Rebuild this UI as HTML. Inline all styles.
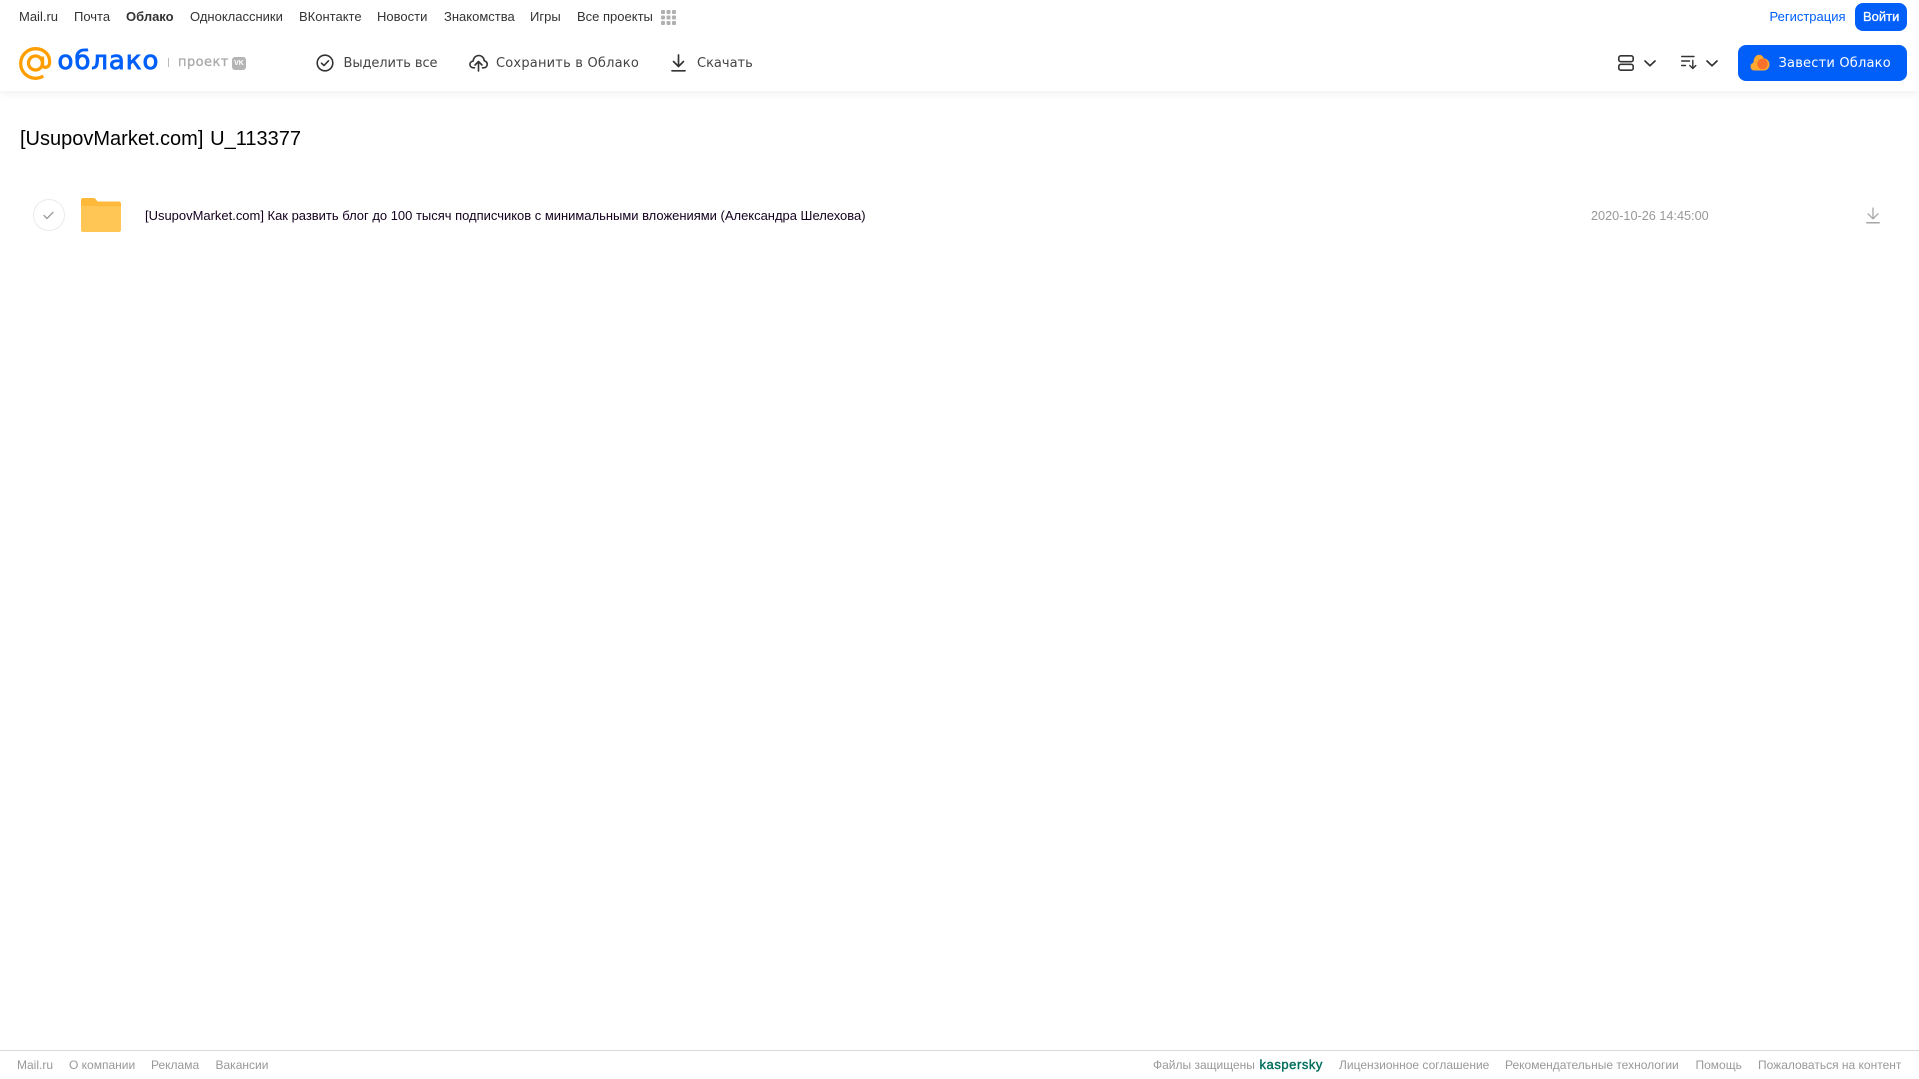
<!DOCTYPE html>
<html lang="ru">
<head>
<meta charset="utf-8">
<title>Облако</title>
<style>
html,body{margin:0;padding:0;background:#fff;width:1919px;height:1079px;overflow:hidden}
body{font-family:"Liberation Sans",Arial,sans-serif;position:relative}
.t{position:absolute;white-space:nowrap;line-height:20px;height:20px}
.n{top:7px;font-size:13px;color:#333}
.b{top:54px;color:#444;font-family:"DejaVu Sans","Liberation Sans",sans-serif;font-size:13px;letter-spacing:0}
.f{top:1055px;font-size:12px;color:#999}
svg{position:absolute;display:block}
#hdr{position:absolute;left:0;top:0;width:1919px;height:91px;background:#fff;box-shadow:0 2px 8px rgba(0,0,0,.07)}
.btn{position:absolute;background:#005ff9;border-radius:8px}
</style>
</head>
<body>
<div id="hdr"></div>

<span class="t n" style="left:19px">Mail.ru</span>
<span class="t n" style="left:74px">Почта</span>
<span class="t n" style="left:126px;font-weight:bold">Облако</span>
<span class="t n" style="left:190px">Одноклассники</span>
<span class="t n" style="left:299px">ВКонтакте</span>
<span class="t n" style="left:377px">Новости</span>
<span class="t n" style="left:444px">Знакомства</span>
<span class="t n" style="left:530px">Игры</span>
<span class="t n" style="left:577px">Все проекты</span>
<svg style="left:661px;top:10px" width="15" height="15" viewBox="0 0 15 15" fill="#b0b0b0">
<rect x="0" y="0" width="4" height="4" rx="1"/><rect x="5.500" y="0" width="4" height="4" rx="1"/><rect x="11" y="0" width="4" height="4" rx="1"/>
<rect x="0" y="5.500" width="4" height="4" rx="1"/><rect x="5.500" y="5.500" width="4" height="4" rx="1"/><rect x="11" y="5.500" width="4" height="4" rx="1"/>
<rect x="0" y="11" width="4" height="4" rx="1"/><rect x="5.500" y="11" width="4" height="4" rx="1"/><rect x="11" y="11" width="4" height="4" rx="1"/>
</svg>

<span class="t" style="left:1769.500px;top:7px;font-size:13px;color:#005ff9">Регистрация</span>
<div class="btn" style="left:1855px;top:3px;width:52px;height:28px"></div>
<span class="t" style="left:1863px;top:7px;font-size:13px;color:#fff;-webkit-text-stroke:.3px #fff">Войти</span>

<svg style="left:19px;top:47px" width="33" height="33" viewBox="0 0 33 33" fill="none" stroke="#ff9e00" stroke-width="3.300">
<circle cx="16.500" cy="16" r="7"/>
<path d="M23.500 9.500V17.500C23.500 21.500 29.800 21.500 30.500 16.500C31.600 7.500 24.500 1.700 16.500 1.700C8.300 1.700 1.700 8.300 1.700 16.500C1.700 24.700 8.300 31.300 16.500 31.300C19.500 31.300 22 30.500 24.300 29"/>
</svg>
<span class="t" style="left:57.500px;top:46px;height:30px;line-height:30px;font-family:'DejaVu Sans','Liberation Sans',sans-serif;font-size:26px;color:#005ff9;letter-spacing:.95px;-webkit-text-stroke:.9px #005ff9">облако</span>
<div style="position:absolute;left:168px;top:58px;width:1px;height:9px;background:#bbb"></div>
<span class="t" style="left:178px;top:53px;font-family:'DejaVu Sans','Liberation Sans',sans-serif;font-size:13px;color:#a9a9a9;letter-spacing:.45px;-webkit-text-stroke:.3px #a9a9a9">проект</span>
<div style="position:absolute;left:232px;top:57px;width:14px;height:13px;background:#b4b4b4;border-radius:3px;color:#fff;font:bold 7px/13px 'Liberation Sans',sans-serif;text-align:center">VK</div>

<svg style="left:316px;top:54px" width="18" height="18" viewBox="0 0 18 18" fill="none" stroke="#333" stroke-width="1.600">
<circle cx="9" cy="9" r="7.800"/><path d="M5.500 9.200L8 11.500L12.500 6.800" stroke-linecap="round" stroke-linejoin="round"/>
</svg>
<span class="t b" style="left:343.500px;letter-spacing:-.1px">Выделить все</span>

<svg style="left:469px;top:54px" width="19" height="18" viewBox="0 0 19 18" fill="none" stroke="#333" stroke-width="1.600" stroke-linecap="round" stroke-linejoin="round">
<path d="M5.500 13.800H4.500C2.400 13.800 .9 12.300 .9 10.500C.9 8.600 2.300 7.300 4 7.200C4.500 3.800 6.800 1.500 9.800 1.500C12.800 1.500 15 3.800 15.300 6.800C17 7.200 18.200 8.600 18.200 10.400C18.200 12.300 16.700 13.800 14.800 13.800H13.500"/>
<path d="M9.500 17V8M6 11L9.500 7.500L13 11"/>
</svg>
<span class="t b" style="left:496px;letter-spacing:.2px">Сохранить в Облако</span>

<svg style="left:671px;top:54px" width="15" height="18" viewBox="0 0 15 18" fill="none" stroke="#333" stroke-width="1.700" stroke-linecap="round" stroke-linejoin="round">
<path d="M7.500 1V12M2.500 7.500L7.500 12.500L12.500 7.500"/><path d="M1 16.800H14"/>
</svg>
<span class="t b" style="left:697px">Скачать</span>

<svg style="left:1618px;top:55px" width="16" height="16" viewBox="0 0 16 16" fill="none" stroke="#333" stroke-width="1.600">
<rect x=".8" y=".8" width="14.400" height="5.900" rx="2"/><rect x=".8" y="9.300" width="14.400" height="5.900" rx="2"/>
</svg>
<svg style="left:1644px;top:60px" width="12" height="7" viewBox="0 0 12 7" fill="none" stroke="#333" stroke-width="1.700" stroke-linecap="round" stroke-linejoin="round"><path d="M1 1L6 5.700L11 1"/></svg>
<svg style="left:1681px;top:55px" width="16" height="15" viewBox="0 0 16 15" fill="none" stroke="#333" stroke-width="1.400" stroke-linecap="round" stroke-linejoin="round">
<path d="M.7 1.500H13M.7 6H8.500M.7 10.500H4.500"/><path d="M11.800 5.500V13.500M8.800 10.500L11.800 13.500L14.800 10.500"/>
</svg>
<svg style="left:1706px;top:60px" width="12" height="7" viewBox="0 0 12 7" fill="none" stroke="#333" stroke-width="1.700" stroke-linecap="round" stroke-linejoin="round"><path d="M1 1L6 5.700L11 1"/></svg>

<div class="btn" style="left:1738px;top:45px;width:169px;height:36px"></div>
<svg style="left:1750px;top:54px" width="20" height="17" viewBox="0 0 20 17">
<path d="M4.500 16.500C2 16.500 .5 14.800 .5 12.500C.5 10.500 1.800 9 3.500 8.700C3.500 4 6 .8 9 .8C11.500 .8 13 2.300 13.800 4.500C17 4.500 19.500 7 19.500 10.500C19.500 14 17 16.500 14 16.500Z" fill="#ffa930"/>
<circle cx="12.500" cy="10" r="5.300" fill="#f8702c"/>
</svg>
<span class="t b" style="left:1778.500px;color:#fff;letter-spacing:.2px">Завести Облако</span>

<span class="t" style="left:20px;top:127px;height:24px;line-height:24px;font-size:20px;word-spacing:1.200px;color:#000">[UsupovMarket.com] U_113377</span>

<div style="position:absolute;left:33px;top:199px;width:30px;height:30px;border:1px solid #ebebeb;border-radius:50%"></div>
<svg style="left:43px;top:211px" width="11" height="9" viewBox="0 0 11 9" fill="none" stroke="#999" stroke-width="1.300" stroke-linecap="round" stroke-linejoin="round"><path d="M1 4.500L4 7.500L10 1.300"/></svg>

<svg style="left:81px;top:198px" width="40" height="34" viewBox="0 0 40 34">
<path d="M0 2C0 .9 .9 0 2 0H12.500C13.500 0 14 .4 14.800 1.200L16.500 3.500H38C39.100 3.500 40 4.400 40 5.500V9H0Z" fill="#ffb93a"/>
<path d="M0 8H38C39.100 8 40 8.900 40 10V32C40 33.100 39.100 34 38 34H2C.9 34 0 33.100 0 32Z" fill="#ffc555"/>
</svg>

<span class="t" style="left:145px;top:206px;font-size:12.980px;color:#14001e">[UsupovMarket.com] Как развить блог до 100 тысяч подписчиков с минимальными вложениями (Александра Шелехова)</span>
<span class="t" style="left:1591px;top:206px;font-size:12.680px;color:#999">2020-10-26 14:45:00</span>
<svg style="left:1866px;top:207px" width="14" height="17" viewBox="0 0 14 17" fill="none" stroke="#a6a6a6" stroke-width="1.300" stroke-linecap="round" stroke-linejoin="round">
<path d="M7 1V11.500M2 6.800L7 11.800L12 6.800"/><path d="M.8 15.800H13.200" stroke-width="1.500"/>
</svg>

<div style="position:absolute;left:0;top:1050px;width:1919px;height:1px;background:#d9d9d9"></div>
<span class="t f" style="left:17px">Mail.ru</span>
<span class="t f" style="left:69px">О компании</span>
<span class="t f" style="left:151px">Реклама</span>
<span class="t f" style="left:215.500px">Вакансии</span>
<span class="t f" style="left:1153px">Файлы защищены</span>
<span class="t f" style="left:1259.500px;color:#006d5c;font-size:13px;letter-spacing:.55px;-webkit-text-stroke:.4px #006d5c">kaspersky</span>
<span class="t f" style="left:1339px">Лицензионное соглашение</span>
<span class="t f" style="left:1505px">Рекомендательные технологии</span>
<span class="t f" style="left:1695.500px">Помощь</span>
<span class="t f" style="left:1758px">Пожаловаться на контент</span>
</body>
</html>
